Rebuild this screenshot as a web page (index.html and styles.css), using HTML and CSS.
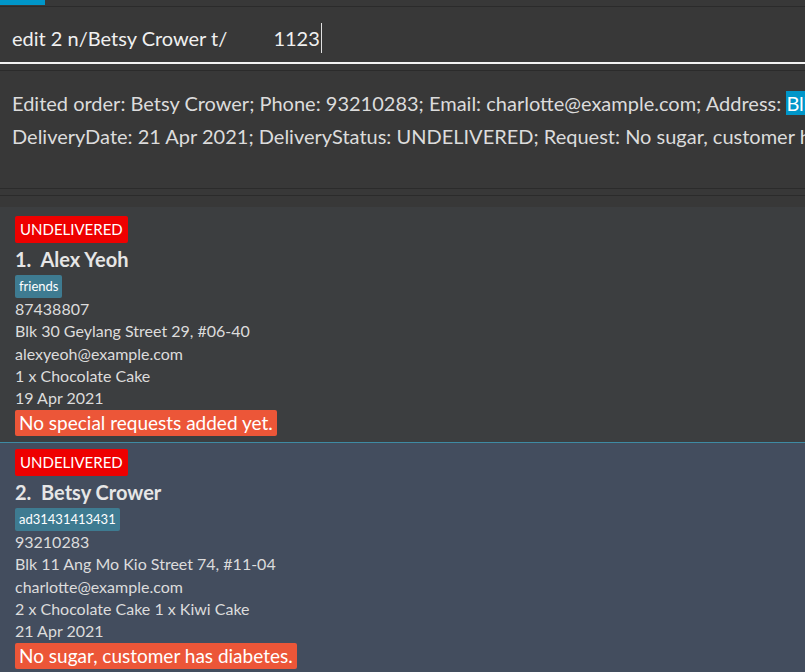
FILE: index.html
```html
<!DOCTYPE html>
<html>
<head>
<meta charset="utf-8">
<link rel="stylesheet" href="styles.css">
</head>
<body>
<div class="app">
  <div class="menubar"><div class="menutab"></div></div>
  <div class="command">
    <span class="cmdtext">edit 2 n/Betsy Crower t/         1123</span><span class="caret"></span>
  </div>
  <div class="gap1"></div>
  <div class="result">
    <div class="rline">Edited order: Betsy Crower; Phone: 93210283; Email: charlotte@example.com; Address: <span class="sel">Blk 11 Ang Mo Kio Street 74, #11-04</span></div>
    <div class="rline">DeliveryDate: 21 Apr 2021; DeliveryStatus: UNDELIVERED; Request: No sugar, customer has diabetes.</div>
  </div>
  <div class="gap2"></div>
  <div class="list">
    <div class="card">
      <div class="status">UNDELIVERED</div>
      <div class="name">1.  Alex Yeoh</div>
      <div class="tags"><span class="tag">friends</span></div>
      <div class="field">87438807</div>
      <div class="field">Blk 30 Geylang Street 29, #06-40</div>
      <div class="field">alexyeoh@example.com</div>
      <div class="field">1 x Chocolate Cake</div>
      <div class="field">19 Apr 2021</div>
      <div class="reqrow"><span class="request">No special requests added yet.</span></div>
    </div>
    <div class="card selected">
      <div class="status">UNDELIVERED</div>
      <div class="name">2.  Betsy Crower</div>
      <div class="tags"><span class="tag">ad31431413431</span></div>
      <div class="field">93210283</div>
      <div class="field">Blk 11 Ang Mo Kio Street 74, #11-04</div>
      <div class="field">charlotte@example.com</div>
      <div class="field">2 x Chocolate Cake 1 x Kiwi Cake</div>
      <div class="field">21 Apr 2021</div>
      <div class="reqrow"><span class="request">No sugar, customer has diabetes.</span></div>
    </div>
  </div>
</div>
</body>
</html>
```
FILE: styles.css
```css
html, body {
  margin: 0;
  padding: 0;
  background: #383838;
  overflow: hidden;
}
.app {
  width: 805px;
  height: 672px;
  overflow: hidden;
  font-family: "Lato", "Open Sans", sans-serif;
}
.menubar {
  height: 6px;
  background: #383838;
  border-bottom: 1px solid #2b2b2b;
}
.menutab {
  width: 45px;
  height: 5px;
  background: #0096c9;
}
.command {
  height: 55px;
  box-sizing: border-box;
  height: 55px;
  border-bottom: 2px solid #f2f2f2;
  padding: 7px 0 0 12px;
  display: flex;
  align-items: center;
  background: #383838;
}
.command {
  height: 57px;
}
.cmdtext {
  color: #f0f0f0;
  font-size: 20px;
  white-space: pre;
}
.caret {
  display: inline-block;
  width: 1px;
  height: 30px;
  background: #e0e0e0;
  margin-left: 1px;
}
.gap1 {
  height: 6px;
  border-bottom: 1px solid #2b2b2b;
}
.result {
  height: 118px;
  padding: 16px 0 0 12px;
  box-sizing: border-box;
  border-bottom: 1px solid #2b2b2b;
  overflow: hidden;
}
.rline {
  color: #dcdcdc;
  font-size: 20px;
  line-height: 33px;
  white-space: nowrap;
}
.sel {
  background: #0096c9;
  color: #ffffff;
}
.gap2 {
  height: 6px;
  border-bottom: 1px solid #2b2b2b;
}
.list {
  padding-top: 11px;
  background: #383838;
}
.card {
  background: #3c3e40;
  padding: 9px 15px 6px;
  height: 235px;
  box-sizing: border-box;
}
.card.selected {
  background: #434d5e;
  border-top: 1px solid #3e8aa3;
  padding-top: 6px;
}
.status {
  display: inline-block;
  background: #ee0000;
  color: #ffffff;
  font-size: 15px;
  height: 27px;
  line-height: 27px;
  padding: 0 5px;
  border-radius: 2px;
}
.name {
  color: #e6e6e6;
  font-size: 20px;
  font-weight: bold;
  line-height: 32px;
  white-space: pre;
}
.tags {
  display: flex;
}
.tag {
  background: #3e7b91;
  color: #ffffff;
  font-size: 13px;
  height: 23px;
  line-height: 23px;
  padding: 0 4px;
  border-radius: 2px;
}
.field {
  color: #dcdcdc;
  font-size: 16px;
  line-height: 22.3px;
}
.reqrow {
  display: flex;
  margin-top: 1px;
}
.request {
  background: #ec5638;
  color: #ffffff;
  font-size: 19px;
  height: 26px;
  line-height: 26px;
  padding: 0 4px;
  border-radius: 2px;
}
```
